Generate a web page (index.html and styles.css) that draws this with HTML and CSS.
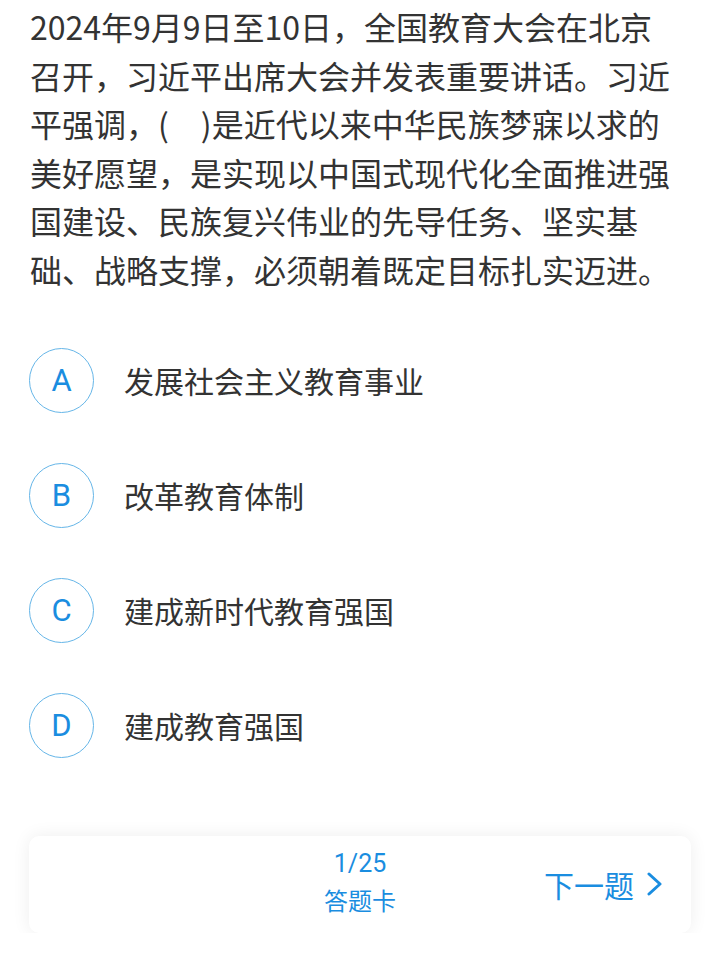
FILE: index.html
```html
<!DOCTYPE html>
<html lang="zh-CN">
<head>
  <meta charset="UTF-8">
  <title>答题</title>
  <link rel="stylesheet" href="styles.css">
</head>
<body>

  <!-- 题目 -->
  <p class="pregunta">2024年9月9日至10日，全国教育大会在北京召开，习近平出席大会并发表重要讲话。习近平强调，(　)是近代以来中华民族梦寐以求的美好愿望，是实现以中国式现代化全面推进强国建设、民族复兴伟业的先导任务、坚实基础、战略支撑，必须朝着既定目标扎实迈进。</p>

  <!-- 选项 -->
  <div class="opciones">
    <div class="opcion">
      <span class="letra">A</span>
      <span class="texto">发展社会主义教育事业</span>
    </div>
    <div class="opcion">
      <span class="letra">B</span>
      <span class="texto">改革教育体制</span>
    </div>
    <div class="opcion">
      <span class="letra">C</span>
      <span class="texto">建成新时代教育强国</span>
    </div>
    <div class="opcion">
      <span class="letra">D</span>
      <span class="texto">建成教育强国</span>
    </div>
  </div>

  <!-- 底部 -->
  <div class="barra">
    <div></div>
    <div class="progreso">
      <div class="numero">1/25</div>
      <div class="tarjeta">答题卡</div>
    </div>
    <div class="siguiente">
      下一题
      <svg width="17" height="24" viewBox="0 0 17 24">
        <polyline points="3,2 14,12 3,22" fill="none" stroke="#1a8de0" stroke-width="3" stroke-linecap="round" stroke-linejoin="round"/>
      </svg>
    </div>
  </div>

</body>
</html>
```

FILE: styles.css
```css
body {
  font-family: "Noto Sans CJK SC", sans-serif;
  background-color: #fff;
  color: #333;
  margin: 0;
}

.pregunta {
  margin: 0;
  padding: 2px 0 0 30px;
  width: 644px;
  font-size: 32px;
  line-height: 48.6px;
}

.opciones {
  margin-top: 54px;
  display: flex;
  flex-direction: column;
  gap: 50px;
}

.opcion {
  display: flex;
  align-items: center;
  height: 65px;
  padding-left: 29px;
}

.letra {
  box-sizing: border-box;
  width: 65px;
  height: 65px;
  border: 1px solid #66b6e8;
  border-radius: 50%;
  display: flex;
  align-items: center;
  justify-content: center;
  font-family: Roboto, sans-serif;
  font-size: 31px;
  color: #1a8de0;
}

.texto {
  margin-left: 30px;
  font-size: 30px;
}

.barra {
  margin: 78px 29px 0;
  height: 97px;
  background-color: #fff;
  border-radius: 10px;
  box-shadow: 0 0 18px rgba(0,0,0,0.07);
  display: grid;
  grid-template-columns: 1fr auto 1fr;
  align-items: center;
  color: #1a8de0;
}

.progreso {
  text-align: center;
  margin-top: -4px;
}

.numero {
  font-family: Roboto, sans-serif;
  font-size: 25px;
  line-height: 36px;
}

.tarjeta {
  font-size: 24px;
  line-height: 36px;
}

.siguiente {
  justify-self: end;
  display: flex;
  align-items: center;
  gap: 12px;
  padding-right: 28px;
  font-size: 30px;
}
```
